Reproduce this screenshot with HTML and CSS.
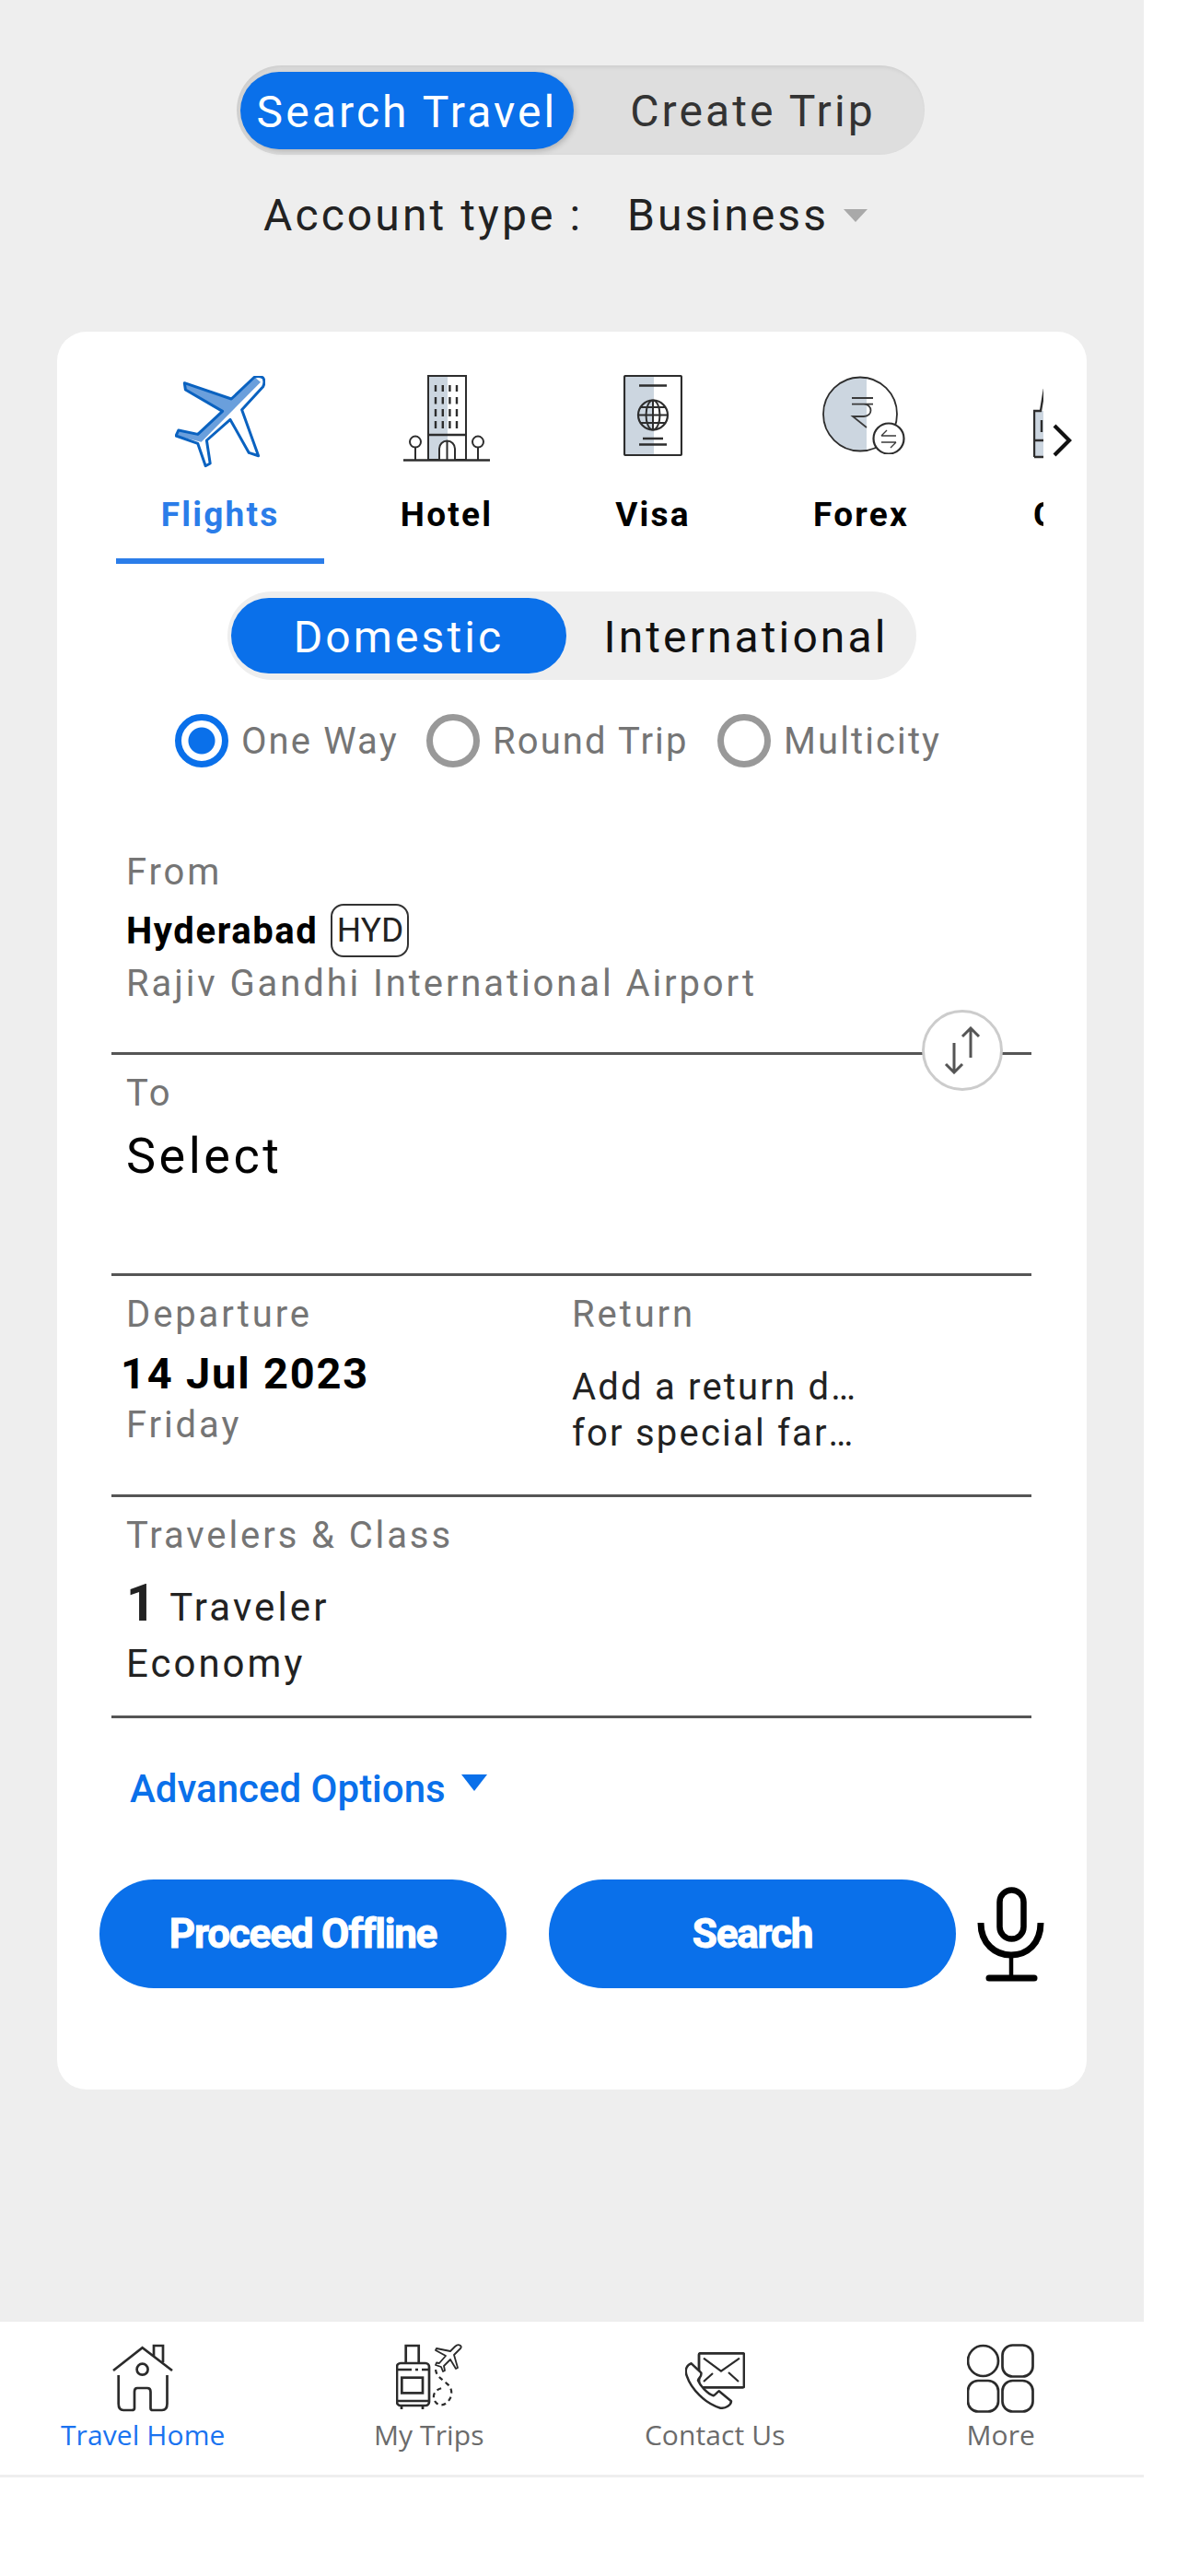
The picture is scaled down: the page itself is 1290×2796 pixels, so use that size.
FILE: index.html
```html
<!DOCTYPE html>
<html lang="en">
<head>
<meta charset="utf-8">
<title>Travel</title>
<link rel="stylesheet" href="styles.css">
</head>
<body>
<div class="app">
  <main class="main">
    <div class="mode-toggle">
      <div class="pill">Search Travel</div>
      <div class="pill-off">Create Trip</div>
    </div>
    <div class="account">
      <span class="account-label">Account type :</span>
      <span class="account-value">Business</span>
      <span class="caret-grey"></span>
    </div>
    <section class="card">
      <div class="tabs-wrap">
        <div class="tabs">
          <div class="tab tab-flights">
            <div class="tab-icon">
              <svg class="ic-plane" viewBox="0 0 98 100">
                <path d="M93 6.7 86 1 61.2 25 10.3 7.7 11.4 15 51.6 38.4 24.8 63.4 3.8 59 1.1 65 28.6 71.7Z" fill="#6a9fdc"/>
                <path d="M95.6 2C92 0 89 0 86 1.5L61.2 25 10.3 7.7 11.4 15 51.6 38.4 24.8 63.4 3.8 59 1.1 65 24.8 73.4 33.2 97.7 38.2 95 34.4 70 60 47.4 80.3 83.4 90.6 86.7 72.6 36.7 95.6 11.7C97.5 8 97.5 5 95.6 2Z" fill="none" stroke="#0a62c0" stroke-width="3" stroke-linejoin="round"/>
              </svg>
            </div>
            <div class="tab-label">Flights</div>
          </div>
          <div class="tab tab-hotel">
            <div class="tab-icon">
              <svg class="ic-hotel" viewBox="0 0 94 94">
                <rect x="27" y="1" width="21" height="91" fill="#ccd6e0"/>
                <rect x="27" y="1" width="41" height="91" fill="none" stroke="#2d2d2d" stroke-width="2"/>
                <path d="M27 65H68" stroke="#2d2d2d" stroke-width="2.4"/>
                <path d="M35 11v7M42.800 11v7M50.400 11v7M58 11v7M35 24v7.500M42.800 24v7.500M50.400 24v7.500M58 24v7.500M35 37v8M42.800 37v8M50.400 37v8M58 37v8M35 50v8M42.800 50v8M50.400 50v8M58 50v8" stroke="#2d2d2d" stroke-width="2.400"/>
                <path d="M39 92V80a8.500 8.500 0 0 1 17 0V92M47.500 72V92" fill="#fff" stroke="#2d2d2d" stroke-width="2"/>
                <circle cx="13" cy="72.600" r="6" fill="#fff" stroke="#2d2d2d" stroke-width="2"/>
                <circle cx="81" cy="72.600" r="6" fill="#fff" stroke="#2d2d2d" stroke-width="2"/>
                <path d="M13 79V92M81 79V92" stroke="#2d2d2d" stroke-width="2"/>
                <path d="M0 92.500H94" stroke="#2d2d2d" stroke-width="2.600"/>
              </svg>
            </div>
            <div class="tab-label">Hotel</div>
          </div>
          <div class="tab tab-visa">
            <div class="tab-icon">
              <svg class="ic-visa" viewBox="0 0 64 88">
                <rect x="1" y="1" width="32" height="86" fill="#ccd6e0"/>
                <rect x="1" y="1" width="62" height="86" rx="1.500" fill="none" stroke="#2d2d2d" stroke-width="2.200"/>
                <path d="M17 11.500H47M21 69H43M17 75.500H47" stroke="#2d2d2d" stroke-width="2.400"/>
                <circle cx="32" cy="43.500" r="16" fill="none" stroke="#2d2d2d" stroke-width="2.200"/>
                <ellipse cx="32" cy="43.500" rx="7.500" ry="16" fill="none" stroke="#2d2d2d" stroke-width="2"/>
                <path d="M32 27.500V59.500M16 43.500H48M19 35H45M19 52H45" stroke="#2d2d2d" stroke-width="2"/>
              </svg>
            </div>
            <div class="tab-label">Visa</div>
          </div>
          <div class="tab tab-forex">
            <div class="tab-icon">
              <svg class="ic-forex" viewBox="0 0 90 85">
                <path d="M48 2A40 40 0 1 0 48 81Z" fill="#ccd6e0"/>
                <circle cx="41" cy="41.500" r="40" fill="none" stroke="#2d2d2d" stroke-width="1.800"/>
                <circle cx="72" cy="68" r="16.500" fill="#fff" stroke="#2d2d2d" stroke-width="2.200"/>
                <path d="M32 24H55M32 30.700H55M45 30.700C55 31 55 44 45 44H33L48 56" fill="none" stroke="#3a3a3a" stroke-width="1.800"/>
                <path d="M64 65H80M64 65l6-6M80 72H64M80 72l-6 6" fill="none" stroke="#3a3a3a" stroke-width="1.400"/>
              </svg>
            </div>
            <div class="tab-label">Forex</div>
          </div>
          <div class="tab tab-cab">
            <div class="tab-icon">
              <svg class="ic-tower" viewBox="0 0 94 76">
                <rect x="1" y="24" width="60" height="50" fill="#ccd6e0"/>
                <path d="M1 74V24H8L12 0M1 56H60M1 74H60" fill="none" stroke="#2d2d2d" stroke-width="2.400"/>
                <path d="M9 34V47" stroke="#2d2d2d" stroke-width="2.400"/>
              </svg>
            </div>
            <div class="tab-label">Cruise</div>
          </div>
        </div>
        <svg class="tabs-next" viewBox="0 0 22 36"><path d="M3 2 19 18 3 34" fill="none" stroke="#111" stroke-width="4.200"/></svg>
      </div>

      <div class="sub-toggle">
        <div class="sub-pill">Domestic</div>
        <div class="sub-off">International</div>
      </div>

      <div class="radios">
        <div class="radio-item radio-one"><span class="radio radio-on"></span><span>One Way</span></div>
        <div class="radio-item radio-two"><span class="radio"></span><span>Round Trip</span></div>
        <div class="radio-item radio-three"><span class="radio"></span><span>Multicity</span></div>
      </div>

      <div class="fields">
        <div class="field">
          <div class="f-label">From</div>
          <div class="city"><span class="city-name">Hyderabad</span><span class="code">HYD</span></div>
          <div class="f-sub">Rajiv Gandhi International Airport</div>
          <div class="swap">
            <svg viewBox="0 0 40 52"><path d="M11 18V50M2 41 11 50 20 41M29 34V2M20 11 29 2 38 11" fill="none" stroke="#555" stroke-width="3"/></svg>
          </div>
        </div>
        <div class="field">
          <div class="f-label">To</div>
          <div class="f-select">Select</div>
        </div>
        <div class="field field-split">
          <div class="col-dep">
            <div class="f-label">Departure</div>
            <div class="date">14 Jul 2023</div>
            <div class="day">Friday</div>
          </div>
          <div class="col-ret">
            <div class="f-label">Return</div>
            <div class="ret-note">
              <div class="ret-line">Add a return date</div>
              <div class="ret-line">for special fares</div>
            </div>
          </div>
        </div>
        <div class="field">
          <div class="f-label">Travelers &amp; Class</div>
          <div class="trav"><span class="trav-n">1</span><span class="trav-t">Traveler</span></div>
          <div class="cabin">Economy</div>
        </div>
      </div>

      <div class="advanced"><span>Advanced Options</span><span class="caret-blue"></span></div>

      <div class="actions">
        <button class="btn">Proceed Offline</button>
        <button class="btn">Search</button>
        <svg class="mic" viewBox="0 0 73 103">
          <rect x="24.500" y="3.500" width="26" height="53" rx="13" fill="none" stroke="#000" stroke-width="6.500"/>
          <path d="M4 39C4 62 20 74 37 74 54 74 69 62 69 39" fill="none" stroke="#000" stroke-width="7"/>
          <path d="M37 74V96" stroke="#000" stroke-width="4.500"/>
          <path d="M13 99H62" stroke="#000" stroke-width="7" stroke-linecap="round"/>
        </svg>
      </div>
    </section>
  </main>

  <nav class="nav">
    <div class="nav-item nav-active">
      <div class="nav-icon">
        <svg class="ic-home" viewBox="0 0 66 74"><g fill="none" stroke="#2b2b2b" stroke-width="2.700"><path d="M1 29 32.600 4.300 65 29M45 13V2H55V20"/><circle cx="32.600" cy="27.700" r="6"/><path d="M6.700 34V65Q6.700 72 12 72H21Q24 72 24 70V52Q24 48 27 48H38Q41.500 48 41.500 52V70Q41.500 72 44 72H54Q59.500 72 59.500 65V34"/></g></svg>
      </div>
      <div class="nav-label">Travel Home</div>
    </div>
    <div class="nav-item">
      <div class="nav-icon">
        <svg class="ic-trips" viewBox="0 0 72 72"><g fill="none" stroke="#2b2b2b" stroke-width="2.700"><path d="M10.700 20V2H24.700V20M6 66V71M29 66V71"/><rect x="1" y="21" width="35" height="46" rx="4"/><rect x="6.300" y="36.700" width="22.700" height="16.700"/><path d="M1 28H17M21 28H24M28 28H36M1 62H36"/><path d="M70 2C68 .5 66 1 64 3L59 8 44 5 43 7 54 13 47 21 44 20.500 43 23 49 25 51 30 53 29 52 24 59 17 65 27 67 26 63 12 70 5C71 4 71 3 70 2Z" stroke-width="1.800" stroke-linejoin="round"/><path d="M43 28C44 36 50 38 55 43 62 48 62 58 55 64 48 70 40 64 41 56 42 51 46 49 50 48" stroke-width="2.200" stroke-dasharray="5 4"/></g></svg>
      </div>
      <div class="nav-label">My Trips</div>
    </div>
    <div class="nav-item">
      <div class="nav-icon nav-icon-low">
        <svg class="ic-contact" viewBox="0 0 65 62"><g fill="none" stroke="#2b2b2b"><rect x="15" y="1.300" width="49" height="37" rx="1.500" stroke-width="2.800"/><path d="M20 6.700 39 20.700 59 6.700M20 32 30 23M58 32 47 22" stroke-width="2.200"/><path d="M6.700 12.300C1.700 14-.7 19 1.700 25.700 6.700 40.700 21.700 55.700 38.300 60.700 44 61.300 50 57.300 50 53.300L36.700 42.300C34 44 32.700 46.700 30.700 47.300 25 45.700 16.700 37.300 14 30.700 15 27.300 18.300 26.700 17.300 22.300Z" fill="#fff" stroke-width="2.500" stroke-linejoin="round"/></g></svg>
      </div>
      <div class="nav-label">Contact Us</div>
    </div>
    <div class="nav-item">
      <div class="nav-icon">
        <svg class="ic-more" viewBox="0 0 73 75"><g fill="none" stroke="#2b2b2b" stroke-width="2.700"><circle cx="17.500" cy="18.500" r="16.500"/><rect x="38.500" y="1.500" width="33" height="34" rx="11"/><rect x="1" y="40" width="33" height="33.500" rx="11"/><rect x="38.500" y="40" width="33" height="33.500" rx="11"/></g></svg>
      </div>
      <div class="nav-label">More</div>
    </div>
  </nav>
</div>
</body>
</html>
```
FILE: styles.css
```css
* { box-sizing: border-box; }
html, body { margin: 0; padding: 0; background: #fff; }
body { font-family: Roboto, "Liberation Sans", sans-serif; color: #000; }
.app { width: 1242px; }
.main { height: 2520px; background: #eeeeee; padding-top: 71px; overflow: hidden; }

.mode-toggle { display: flex; align-items: center; width: 747px; height: 97px; margin-left: 257px; padding: 0 4px; background: #dedede; border-radius: 49px; box-shadow: inset 2px 2px 4px rgba(0,0,0,.08); font-size: 48px; letter-spacing: 3.1px; }
.pill { width: 362px; height: 84px; padding-top: 2px; line-height: 84px; text-align: center; border-radius: 42px; background: #0a70ea; color: #fff; box-shadow: 2px 2px 6px rgba(0,0,0,.2); white-space: nowrap; }
.pill-off { flex: 1; padding: 2px 0 0 12px; text-align: center; color: #333; white-space: nowrap; }

.account { display: flex; align-items: center; height: 60px; margin: 36px 0 0 286px; font-size: 48px; letter-spacing: 3.1px; color: #222; line-height: 60px; }
.account-label { width: 395px; white-space: nowrap; }
.caret-grey { width: 0; height: 0; margin-left: 16px; border-left: 13px solid transparent; border-right: 13px solid transparent; border-top: 14px solid #a9a9a9; }

.card { width: 1118px; height: 1908px; margin: 96px 0 0 62px; background: #fff; border-radius: 32px; }

.tabs-wrap { position: relative; }
.tabs { display: flex; width: 1071px; margin-left: 0; padding-left: 64px; overflow: hidden; }
.tab { flex: none; display: flex; flex-direction: column; align-items: center; padding-top: 46px; }
.tab-flights { width: 226px; border-bottom: 6px solid #2b7de9; color: #2b7de9; }
.tab-hotel { width: 266px; }
.tab-visa { width: 182px; }
.tab-forex { width: 270px; }
.tab-cab { width: 140px; align-items: flex-start; padding-left: 52px; }
.tab-icon { height: 110px; }
.tab-icon svg { display: block; }
.tab-label { margin-top: 18px; margin-bottom: 22px; font-size: 37px; font-weight: 700; line-height: 50px; letter-spacing: 2.2px; white-space: nowrap; }
.ic-plane { width: 98px; height: 100px; margin-top: 2px; }
.ic-hotel { width: 94px; height: 94px; margin-top: 1px; }
.ic-visa { width: 64px; height: 88px; margin-top: 1px; }
.ic-forex { width: 90px; height: 85px; margin: 2px 0 0 6px; }
.ic-tower { width: 94px; height: 76px; margin-top: 16px; }
.tabs-next { position: absolute; left: 1080px; top: 100px; width: 22px; height: 36px; }

.sub-toggle { display: flex; align-items: center; width: 748px; height: 96px; margin: 30px 0 0 185px; padding: 0 4px; background: #eeeeee; border-radius: 48px; font-size: 48px; letter-spacing: 3.1px; }
.sub-pill { width: 364px; height: 82px; padding-top: 2px; line-height: 82px; text-align: center; border-radius: 41px; background: #0a70ea; color: #fff; }
.sub-off { flex: 1; padding: 2px 0 0 14px; text-align: center; color: #111; white-space: nowrap; }

.radios { display: flex; align-items: center; height: 58px; margin: 37px 0 0 128px; font-size: 40px; letter-spacing: 2.1px; color: #757575; }
.radio-item { display: flex; align-items: center; gap: 14px; white-space: nowrap; }
.radio-one { width: 273px; }
.radio-two { width: 316px; }
.radio { flex: none; width: 58px; height: 58px; border: 7px solid #999; border-radius: 50%; background: #fff; }
.radio-on { border-color: #0a70ea; background: radial-gradient(circle, #0a70ea 0 14px, #fff 15px); }

.fields { width: 999px; margin: 72px 0 0 59px; }
.field { position: relative; height: 240px; padding: 20px 0 0 16px; border-bottom: 3px solid #555; }
.field-split { display: flex; }
.f-label { font-size: 40px; line-height: 44px; letter-spacing: 2.9px; color: #757575; white-space: nowrap; }
.city { display: flex; align-items: center; height: 60px; margin-top: 11px; }
.city-name { font-size: 40px; font-weight: 700; letter-spacing: 1.6px; }
.code { width: 85px; height: 58px; margin-left: 14px; border: 2px solid #333; border-radius: 14px; font-size: 37px; line-height: 54px; text-align: center; color: #222; }
.f-sub { font-size: 40px; line-height: 56px; letter-spacing: 2.9px; color: #757575; white-space: nowrap; }
.swap { position: absolute; right: 31px; bottom: -42px; display: flex; align-items: center; justify-content: center; width: 88px; height: 88px; border: 3px solid #ccc; border-radius: 50%; background: #fff; }
.swap svg { width: 40px; height: 52px; }
.f-select { font-size: 54px; line-height: 92px; letter-spacing: 3.5px; color: #000; }
.col-dep { width: 484px; }
.date { margin-left: -6px; font-size: 47px; font-weight: 700; line-height: 84px; letter-spacing: 1.8px; white-space: nowrap; }
.day { font-size: 40px; line-height: 28px; letter-spacing: 2.9px; color: #757575; }
.ret-note { margin-top: 32px; }
.ret-line { width: 312px; font-size: 40px; line-height: 50px; letter-spacing: 2.2px; color: #222; white-space: nowrap; overflow: hidden; text-overflow: ellipsis; }
.trav { display: flex; align-items: baseline; height: 80px; margin-top: 11px; line-height: 80px; }
.trav-n { font-size: 56px; font-weight: 700; color: #222; }
.trav-t { margin-left: 15px; font-size: 42px; letter-spacing: 3.1px; color: #222; }
.cabin { font-size: 42px; line-height: 52px; letter-spacing: 3px; color: #222; }

.advanced { display: flex; align-items: flex-start; gap: 17px; height: 60px; margin: 47px 0 0 79px; font-size: 42px; font-weight: 500; line-height: 60px; color: #0a70ea; }
.caret-blue { width: 0; height: 0; margin-top: 14px; border-left: 14px solid transparent; border-right: 14px solid transparent; border-top: 18px solid #0a70ea; }

.actions { display: flex; align-items: center; height: 118px; margin: 68px 0 0 46px; }
.btn { flex: none; width: 442px; height: 118px; margin: 0 46px 0 0; padding: 0; border: 0; border-radius: 59px; background: #0a70ea; color: #fff; font-family: Roboto, "Liberation Sans", sans-serif; font-size: 44px; font-weight: 700; letter-spacing: -1.2px; -webkit-text-stroke: 1px #fff; }
.btn + .btn { margin-right: 23px; }
.mic { flex: none; width: 73px; height: 103px; }

.nav { display: grid; grid-template-columns: repeat(4, 1fr); height: 169px; background: #fff; border-bottom: 3px solid #eeeeee; }
.nav-item { display: flex; flex-direction: column; align-items: center; padding-top: 24px; color: #6b6b6b; }
.nav-active { color: #1a73f0; }
.nav-icon { height: 79px; }
.nav-icon svg { display: block; }
.nav-icon-low { padding-top: 9px; }
.ic-home { width: 66px; height: 74px; }
.ic-trips { width: 72px; height: 72px; }
.ic-contact { width: 65px; height: 62px; }
.ic-more { width: 73px; height: 75px; }
.nav-label { font-family: "Open Sans", sans-serif; font-size: 30px; line-height: 40px; letter-spacing: .1px; white-space: nowrap; }
```
